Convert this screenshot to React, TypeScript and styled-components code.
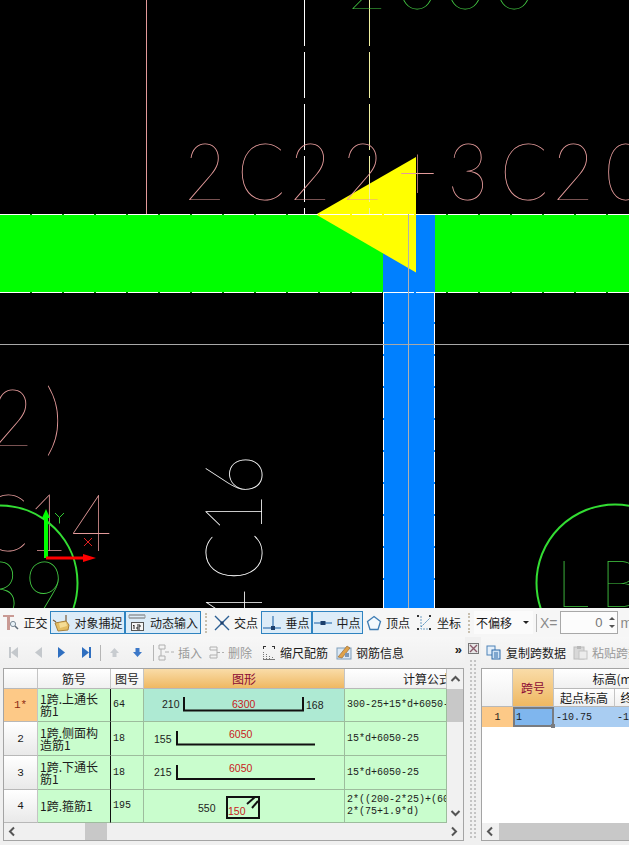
import styled, { createGlobalStyle } from "styled-components";

const GlobalStyle = createGlobalStyle`
  html, body {
    margin: 0;
    padding: 0;
    background: #f0f0f0;
  }
`;

const uiFont = `"Noto Sans CJK SC", "Liberation Sans", sans-serif`;
const monoFont = `"Liberation Mono", "Noto Sans CJK SC", monospace`;

const Page = styled.div`
  width: 629px;
  height: 845px;
  display: flex;
  flex-direction: column;
  overflow: hidden;
  background: #f0f0f0;
  font-family: ${uiFont};
  font-size: 12px;
  color: #1c1c1c;
`;

const Drawing = styled.svg`
  display: block;
  flex: none;
  width: 629px;
  height: 608px;
  background: #000;
`;

const CadText = styled.text<{ $color: string; $size?: number }>`
  font-family: "Lato", "Roboto", sans-serif;
  font-weight: 100;
  font-size: ${(p) => p.$size ?? 80}px;
  fill: ${(p) => p.$color};
`;

const SnapBar = styled.div`
  flex: none;
  height: 29px;
  display: flex;
  align-items: center;
  background: #f6f6f6;
  white-space: nowrap;
`;

const SnapButton = styled.div<{ $active?: boolean; $width: number }>`
  flex: none;
  box-sizing: border-box;
  width: ${(p) => p.$width}px;
  height: 23px;
  display: flex;
  align-items: center;
  justify-content: center;
  gap: 4px;
  border: 1px solid ${(p) => (p.$active ? "#2f83c0" : "transparent")};
  background: ${(p) => (p.$active ? "#dcecf8" : "transparent")};
`;

const DottedRule = styled.div<{ $gap: number }>`
  flex: none;
  width: 0;
  height: 20px;
  margin: 0 ${(p) => p.$gap}px;
  border-left: 2px dotted #c8bfae;
`;

const OffsetSelect = styled.div`
  flex: none;
  box-sizing: border-box;
  width: 59px;
  height: 23px;
  display: flex;
  align-items: center;
  justify-content: space-between;
  padding: 0 4px 0 2px;
  background: #fbfbfb;
`;

const Caret = styled.span`
  width: 0;
  height: 0;
  border-left: 3px solid transparent;
  border-right: 3px solid transparent;
  border-top: 3px solid #222;
`;

const ThinRule = styled.div`
  flex: none;
  width: 1px;
  height: 18px;
  margin: 0 3px;
  background: #b8b8b8;
`;

const GreyLabel = styled.span`
  color: #8a8a8a;
  font-family: "Liberation Sans", sans-serif;
  font-size: 14px;
`;

const SpinBox = styled.div`
  flex: none;
  box-sizing: border-box;
  width: 58px;
  height: 23px;
  margin: 0 3px 0 2px;
  display: flex;
  align-items: center;
  justify-content: flex-end;
  gap: 6px;
  padding-right: 2px;
  border: 1px solid #a8a8a8;
  background: #fcfcfc;
  color: #777;
  font-family: "Liberation Sans", sans-serif;
  font-size: 13px;
`;

const SpinArrows = styled.div`
  display: flex;
  flex-direction: column;
  gap: 5px;
`;

const SpinArrow = styled.span<{ $down?: boolean }>`
  display: block;
  width: 0;
  height: 0;
  border-left: 3px solid transparent;
  border-right: 3px solid transparent;
  border-${(p) => (p.$down ? "top" : "bottom")}: 3px solid #555;
`;

const Panes = styled.div`
  flex: 1;
  display: flex;
  min-height: 0;
`;

const Pane = styled.div<{ $width?: number }>`
  ${(p) => (p.$width ? `width: ${p.$width}px; flex: none;` : "flex: 1; min-width: 0;")}
  display: flex;
  flex-direction: column;
`;

const PaneToolbar = styled.div<{ $pad: number }>`
  flex: none;
  height: 31px;
  box-sizing: border-box;
  padding-left: ${(p) => p.$pad}px;
  display: flex;
  align-items: center;
  white-space: nowrap;
  overflow: hidden;
  background: linear-gradient(#f7f7f7, #efefef);
`;

const ToolSlot = styled.div<{ $width: number }>`
  flex: none;
  width: ${(p) => p.$width}px;
  display: flex;
  align-items: center;
  justify-content: center;
`;

const ToolAction = styled.div<{ $muted?: boolean; $gap: number; $inner?: number }>`
  flex: none;
  display: flex;
  align-items: center;
  gap: ${(p) => p.$inner ?? 4}px;
  margin-right: ${(p) => p.$gap}px;
  color: ${(p) => (p.$muted ? "#9a9a9a" : "#1c1c1c")};
`;

const ToolRule = styled.div<{ $gap: number }>`
  flex: none;
  width: 1px;
  height: 16px;
  margin: 0 ${(p) => p.$gap}px;
  background: #b5b5b5;
`;

const Overflow = styled.span`
  margin-left: auto;
  margin-right: 3px;
  font-family: "Liberation Sans", sans-serif;
  font-weight: 700;
  font-size: 13px;
  line-height: 13px;
  margin-bottom: 6px;
`;

const Frame = styled.div<{ $left: number; $right: number }>`
  box-sizing: border-box;
  height: 173px;
  margin: 0 ${(p) => p.$right}px 0 ${(p) => p.$left}px;
  display: grid;
  grid-template-rows: 154px 17px;
  border: 1px solid #a4a4a4;
  background: #fff;
  overflow: hidden;
`;

const LeftBody = styled.div`
  display: grid;
  grid-template-columns: 443px 16px;
  min-height: 0;
`;

const BarGrid = styled.div`
  display: grid;
  grid-template-columns: 34px 73px 33px 201px 102px;
  grid-template-rows: 20px 33px 34px 34px 33px;
  overflow: hidden;
`;

const HeadCell = styled.div<{ $hot?: boolean; $span?: number; $shift?: number }>`
  box-sizing: border-box;
  display: flex;
  align-items: center;
  justify-content: ${(p) => (p.$shift ? "flex-start" : "center")};
  padding-left: ${(p) => p.$shift ?? 0}px;
  ${(p) => (p.$span ? `grid-column: span ${p.$span};` : "")}
  border-right: 1px solid #c4c4c4;
  border-bottom: 1px solid #b8b8b8;
  background: ${(p) =>
    p.$hot ? "linear-gradient(#f9dca8, #efb862)" : "linear-gradient(#ffffff, #f0f0f0)"};
  color: ${(p) => (p.$hot ? "#8c0a34" : "#1c1c1c")};
  overflow: hidden;
  white-space: nowrap;
`;

const RowHead = styled.div<{ $current?: boolean }>`
  box-sizing: border-box;
  display: flex;
  align-items: center;
  justify-content: center;
  border-right: 1px solid #c4c4c4;
  border-bottom: 1px solid #b8b8b8;
  background: ${(p) => (p.$current ? "#fdc987" : "linear-gradient(#ffffff, #e9e9e9)")};
  color: ${(p) => (p.$current ? "#8c2a14" : "#1c1c1c")};
  font-family: ${monoFont};
  font-size: 11px;
`;

const DataCell = styled.div<{ $picked?: boolean; $heavy?: boolean; $mono?: boolean }>`
  box-sizing: border-box;
  display: flex;
  align-items: center;
  padding: 0 ${(p) => (p.$mono ? 2 : 0)}px;
  border-right: 1px solid ${(p) => (p.$heavy ? "#111" : "#9dbc9d")};
  border-bottom: 1px solid #9dbc9d;
  background: ${(p) => (p.$picked ? "#aeead3" : "#c9fdcd")};
  overflow: hidden;
  font-family: ${(p) => (p.$mono ? monoFont : uiFont)};
  font-size: ${(p) => (p.$mono ? 10 : 12)}px;
  line-height: 12px;
  white-space: pre;
`;

const NameText = styled.div`
  padding-left: 2px;
  width: 64px;
  white-space: normal;
  word-break: break-all;
`;

const Shape = styled.svg`
  display: block;
  flex: none;
  align-self: flex-start;
  width: 200px;
  height: 34px;
`;

const ShapeLabel = styled.text<{ $red?: boolean }>`
  font-family: "Liberation Sans", sans-serif;
  font-size: 10.5px;
  fill: ${(p) => (p.$red ? "#c8201c" : "#222")};
`;

const VScroll = styled.div`
  display: grid;
  grid-template-rows: 20px 33px 1fr 20px;
  background: #f1f1f1;
`;

const ScrollArrow = styled.div`
  display: flex;
  align-items: center;
  justify-content: center;
`;

const ScrollSlab = styled.div`
  background: #c8c8c8;
`;

const HThumb = styled(ScrollSlab)`
  flex: none;
  width: 22px;
  margin-left: 64px;
`;

const HScroll = styled.div`
  display: flex;
  align-items: stretch;
  background: #f0f0f0;
`;

const HArrow = styled(ScrollArrow)<{ $end?: boolean }>`
  flex: none;
  width: 17px;
  ${(p) => (p.$end ? "margin-left: auto;" : "")}
`;

const Splitter = styled.div`
  flex: none;
  width: 16px;
  display: flex;
  flex-direction: column;
  align-items: center;
  padding-top: 6px;
  gap: 5px;
`;

const Grip = styled.div`
  flex: 1;
  width: 8px;
  margin-bottom: 5px;
  background-image: radial-gradient(circle, #c4c4c4 1px, transparent 1.2px);
  background-size: 4px 4px;
`;

const SpanGrid = styled.div`
  display: grid;
  grid-template-columns: 31px 41px 61px 60px;
  grid-template-rows: 20px 18px 20px 1fr;
  overflow: hidden;
  background: #fff;
`;

const CornerCell = styled(HeadCell)`
  grid-row: span 2;
`;

const SpanRow = styled.div<{ $current?: boolean }>`
  display: flex;
  align-items: center;
  justify-content: ${(p) => (p.$current ? "center" : "flex-start")};
  padding-left: ${(p) => (p.$current ? 0 : 2)}px;
  background: ${(p) => (p.$current ? "#fdc987" : "#a9cdf2")};
  font-family: ${monoFont};
  font-size: 10px;
`;

const ActiveCell = styled.div`
  position: relative;
  box-sizing: border-box;
  display: flex;
  align-items: center;
  padding-left: 1px;
  border: 2px solid #787b80;
  background: #7fb6ee;
  font-family: ${monoFont};
  font-size: 10px;
`;

const Handle = styled.span`
  position: absolute;
  right: -3px;
  bottom: -3px;
  width: 4px;
  height: 4px;
  background: #787b80;
`;

const Filler = styled.div`
  grid-column: 1 / -1;
`;

const RightThumb = styled(ScrollSlab)`
  flex: 1;
`;

/* ---------- icons ---------- */

const Icon = styled.svg`
  display: block;
  flex: none;
`;

const OrthoIcon = () => (
  <Icon width="17" height="17" viewBox="0 0 17 17">
    <path d="M1 1h11v2H8v13H5V3H1z" fill="#c99a94" />
    <circle cx="11" cy="10" r="2.6" fill="#e8f2f8" stroke="#7d8c98" />
    <path d="M13 12l3 3" stroke="#5f6c78" strokeWidth="1.5" />
  </Icon>
);

const CaptureIcon = () => (
  <Icon width="18" height="18" viewBox="0 0 18 18">
    <path d="M1 6l3 2M14 1v7" stroke="#7a5c3c" strokeWidth="1.2" />
    <path d="M3 9l11-2 3 4-1 5-10 1z" fill="#e4bd62" stroke="#a8813c" />
    <path d="M7 9l7-1 1 4-7 2z" fill="#f5dc94" />
  </Icon>
);

const InputIcon = () => (
  <Icon width="18" height="18" viewBox="0 0 18 18">
    <path d="M1 1h16M1 4h16" stroke="#6c6c6c" />
    <path d="M1 1v3M17 1v3" stroke="#9a9a9a" />
    <rect x="3.5" y="8.5" width="12" height="8" fill="#f5f5f5" stroke="#555" />
    <path d="M6 15v-4l-1 1M9 11h3v2H9v2h3" fill="none" stroke="#222" />
  </Icon>
);

const CrossIcon = () => (
  <Icon width="16" height="16" viewBox="0 0 16 16">
    <path d="M1 1l14 14M15 1L1 15" stroke="#2c5f94" strokeWidth="1.4" />
    <rect x="6.500" y="6.500" width="3" height="3" fill="#1c3f6c" />
  </Icon>
);

const PerpIcon = () => (
  <Icon width="18" height="16" viewBox="0 0 18 16">
    <path d="M0 13h18" stroke="#4c86bc" strokeWidth="1.4" />
    <path d="M10 1v11" stroke="#4c86bc" strokeWidth="1.4" />
    <rect x="8" y="11" width="4" height="4" fill="#1c3f6c" />
  </Icon>
);

const MidIcon = () => (
  <Icon width="18" height="16" viewBox="0 0 18 16">
    <path d="M0 8h18" stroke="#4c86bc" strokeWidth="1.4" />
    <rect x="6.500" y="6" width="5" height="4" fill="#1c3f6c" />
  </Icon>
);

const VertexIcon = () => (
  <Icon width="16" height="16" viewBox="0 0 16 16">
    <path d="M8 1.500l6.500 5-2.500 8H4L1.500 6.500z" fill="#f4f9fd" stroke="#3f7db4" strokeWidth="1.3" />
  </Icon>
);

const CoordIcon = () => (
  <Icon width="17" height="17" viewBox="0 0 17 17">
    <path d="M5 2v13h11" fill="none" stroke="#6e9fc4" strokeDasharray="2 1" />
    <path d="M5 13L14 4" stroke="#4d8dbc" strokeDasharray="2 1" />
    <rect x="1" y="1" width="2" height="2" fill="#333" />
    <rect x="13" y="1" width="2" height="2" fill="#333" />
    <rect x="1" y="14" width="2" height="2" fill="#333" />
    <rect x="13" y="14" width="2" height="2" fill="#333" />
  </Icon>
);

const NavIcon = ({ dir, bar, on }: { dir: "l" | "r"; bar?: boolean; on?: boolean }) => {
  const fill = on ? "#2f6fc0" : "#c4c8cc";
  return (
    <Icon width="10" height="13" viewBox="0 0 10 13">
      <path d={dir === "r" ? "M1 1l7 5.500L1 12z" : "M9 1L2 6.500 9 12z"} fill={fill} />
      {bar && <rect x={dir === "r" ? 8 : 0} y="1" width="2" height="11" fill={fill} />}
    </Icon>
  );
};

const MoveIcon = ({ up, on }: { up?: boolean; on?: boolean }) => (
  <Icon width="11" height="11" viewBox="0 0 11 11">
    <path
      d={up ? "M5.500 1L10 6H7.500v4h-4V6H1z" : "M5.500 10L10 5H7.500V1h-4v4H1z"}
      fill={on ? "#3c78c8" : "#c8ccd0"}
    />
  </Icon>
);

const InsertIcon = () => (
  <Icon width="16" height="17" viewBox="0 0 16 17">
    <path d="M1 1h6v4H1zM1 12h6v4H1zM3 5v7M7 8h4M13 8h3" fill="none" stroke="#b0b0b0" />
  </Icon>
);

const DeleteIcon = () => (
  <Icon width="15" height="13" viewBox="0 0 15 13">
    <path d="M1 1h7v3H1zM1 9h7v3H1zM8 4v5M8 6.500h3M13 6.500h2" fill="none" stroke="#b0b0b0" />
  </Icon>
);

const ScaleIcon = () => (
  <Icon width="14" height="15" viewBox="0 0 14 15">
    <path d="M1 1.500h3M10 1.500h3M12.500 1v3M1.500 1v3" stroke="#333" />
    <path d="M1.500 7v7M4.500 9v5M7.500 11v3M10.500 12v2" stroke="#777" strokeDasharray="1 1" />
    <path d="M1 14.500h12" stroke="#777" />
  </Icon>
);

const InfoIcon = () => (
  <Icon width="16" height="15" viewBox="0 0 16 15">
    <rect x="1" y="3" width="14" height="11" fill="#dbe8f4" stroke="#7f9dba" />
    <path d="M2 12L11 1l3 2-8 10z" fill="#e0a24a" stroke="#8c5f2c" strokeWidth=".6" />
    <rect x="9" y="8" width="4" height="4" fill="#7e97b4" />
  </Icon>
);

const CopyIcon = () => (
  <Icon width="15" height="15" viewBox="0 0 15 15">
    <rect x="1" y="1" width="8" height="9" fill="#e4effa" stroke="#4f83b8" />
    <rect x="6" y="5" width="8" height="9" fill="#cfe2f5" stroke="#2f6aa8" />
    <path d="M8 8h4M8 10h4M8 12h4" stroke="#2f6aa8" />
  </Icon>
);

const PasteIcon = () => (
  <Icon width="15" height="15" viewBox="0 0 15 15">
    <rect x="1" y="2" width="10" height="12" fill="#d8d8d8" stroke="#bcbcbc" />
    <rect x="4" y="1" width="4" height="3" fill="#b8b8b8" />
    <rect x="6" y="6" width="8" height="8" fill="#ececec" stroke="#c4c4c4" />
  </Icon>
);

const CloseBox = () => (
  <Icon width="11" height="11" viewBox="0 0 11 11">
    <rect x=".5" y=".5" width="10" height="10" fill="#e6e6e6" stroke="#777" />
    <path d="M2 2l7 7M9 2L2 9" stroke="#8a5a6a" strokeWidth="1.4" />
  </Icon>
);

const Chevron = ({ dir }: { dir: "up" | "down" | "left" | "right" }) => {
  const paths = {
    up: "M1.500 7L5.500 3l4 4",
    down: "M1.500 3l4 4 4-4",
    left: "M7 1.500L3 5.500l4 4",
    right: "M3 1.500l4 4-4 4",
  };
  return (
    <Icon width="11" height="11" viewBox="0 0 11 11">
      <path d={paths[dir]} fill="none" stroke="#555" strokeWidth="2" />
    </Icon>
  );
};

/* ---------- data ---------- */

const snapTools = [
  { label: "交点", width: 50, icon: <CrossIcon /> },
  { label: "垂点", width: 51, icon: <PerpIcon />, active: true },
  { label: "中点", width: 51, icon: <MidIcon />, active: true },
  { label: "顶点", width: 50, icon: <VertexIcon /> },
  { label: "坐标", width: 51, icon: <CoordIcon /> },
];

const bars = [
  { no: "1*", name: "1跨.上通长筋1", fig: "64", formula: "300-25+15*d+6050-", current: true },
  { no: "2", name: "1跨.侧面构造筋1", fig: "18", formula: "15*d+6050-25" },
  { no: "3", name: "1跨.下通长筋1", fig: "18", formula: "15*d+6050-25" },
  { no: "4", name: "1跨.箍筋1", fig: "195", formula: "2*((200-2*25)+(60\n2*(75+1.9*d)" },
];

const BarShape = ({ index }: { index: number }) => {
  if (index === 0) {
    return (
      <Shape>
        <ShapeLabel x="18" y="19">210</ShapeLabel>
        <path d="M40 8v13.500h119V8" fill="none" stroke="#111" strokeWidth="2" />
        <ShapeLabel x="88" y="19" $red>6300</ShapeLabel>
        <ShapeLabel x="162" y="20">168</ShapeLabel>
      </Shape>
    );
  }
  if (index === 3) {
    return (
      <Shape>
        <ShapeLabel x="54" y="22">550</ShapeLabel>
        <path d="M83 7h32v21H83z" fill="none" stroke="#111" strokeWidth="2" />
        <path d="M103 14l8-7M108 18l6-7" stroke="#111" strokeWidth="2" />
        <ShapeLabel x="84" y="25" $red>150</ShapeLabel>
      </Shape>
    );
  }
  const second = index === 1;
  return (
    <Shape>
      <ShapeLabel x="10" y={second ? 21 : 20}>{second ? "155" : "215"}</ShapeLabel>
      <path d={`M33 9V${second ? 22.5 : 23}h138`} fill="none" stroke="#111" strokeWidth="2" />
      <ShapeLabel x="85" y="16" $red>6050</ShapeLabel>
    </Shape>
  );
};

// CAD text is narrower than the font, so each run is squeezed and its glyphs placed one by one
const squeeze = 0.88;
const run = (xs: number[], origin: string) => ({
  x: xs.map((v) => v / squeeze).join(" "),
  y: 0,
  transform: `${origin} scale(${squeeze} 1)`,
});

export default function App() {
  return (
    <Page>
      <GlobalStyle />
      <Drawing viewBox="0 0 629 608">
        {/* beam and column fills */}
        <rect x="383" y="214" width="52" height="394" fill="#0080ff" />
        <rect x="0" y="214.500" width="383" height="78" fill="#00ff00" />
        <rect x="435" y="214.500" width="194" height="78" fill="#00ff00" />
        <polygon points="316,214.500 416,157 416,272.500" fill="#ffff00" />

        <line x1="146.500" y1="0" x2="146.500" y2="214" stroke="#e39a9a" />
        <line x1="304.500" y1="0" x2="304.500" y2="214" stroke="#fff" strokeDasharray="46 6" />
        <line x1="369.500" y1="0" x2="369.500" y2="214" stroke="#f0f0a0" strokeDasharray="46 6" />

        <CadText
          $color="#e39a9a"
          {...run([184.5, 237.1, 289.7, 342.3, 396.9, 447.5, 500.1, 552.7, 605.3], "translate(0 200)")}
        >
          2C22+3C20
        </CadText>
        <CadText $color="#44cc44" x="348 398 446 495" y="9" $size={66}>2000</CadText>
        <CadText $color="#e39a9a" {...run([-8, 45], "translate(0 446)")}>2)</CadText>
        <CadText $color="#e39a9a" {...run([-20, 27, 71], "translate(0 551)")}>C14</CadText>
        <CadText $color="#44cc44" {...run([-21, 24], "translate(0 618)")}>39</CadText>
        <CadText $color="#ffffff" {...run([-20, 29, 76, 114.5], "translate(262 610) rotate(-90)")}>4C16</CadText>
        <CadText $color="#44cc44" x="556 600" y="607" $size={66}>LB</CadText>

        <circle cx="0" cy="583" r="77.500" fill="none" stroke="#33dd33" strokeWidth="2" />
        <circle cx="615" cy="583" r="78.500" fill="none" stroke="#33dd33" strokeWidth="2" />

        <line x1="0" y1="214.500" x2="629" y2="214.500" stroke="#fff" strokeDasharray="30 2" />
        <line x1="0" y1="292.500" x2="629" y2="292.500" stroke="#fff" strokeDasharray="30 2" />
        <line x1="383.500" y1="292" x2="383.500" y2="608" stroke="#fff" strokeDasharray="30 2" />
        <line x1="434.500" y1="292" x2="434.500" y2="608" stroke="#fff" strokeDasharray="30 2" />

        <line x1="0" y1="344.500" x2="629" y2="344.500" stroke="#a8a8a8" />
        <line x1="408.500" y1="214" x2="408.500" y2="608" stroke="#b0b0b0" />

        {/* UCS axes */}
        <path d="M46 558V514" stroke="#00ff00" strokeWidth="4" />
        <path d="M46 509l4 9h-8z" fill="#00ff00" />
        <path d="M46 558h38" stroke="#ff0000" strokeWidth="3" />
        <path d="M96 558l-13-4v8z" fill="#ff0000" />
        <path d="M55 513l4.500 4.500 4.500-4.500M59.500 517.500v6" fill="none" stroke="#33cc33" />
        <path d="M84 538l8 8M92 538l-8 8" fill="none" stroke="#e02020" />
      </Drawing>

      <SnapBar>
        <SnapButton $width={50}><OrthoIcon />正交</SnapButton>
        <SnapButton $width={75} $active><CaptureIcon />对象捕捉</SnapButton>
        <SnapButton $width={76} $active><InputIcon />动态输入</SnapButton>
        <DottedRule $gap={4} />
        {snapTools.map((tool) => (
          <SnapButton key={tool.label} $width={tool.width} $active={tool.active}>
            {tool.icon}
            {tool.label}
          </SnapButton>
        ))}
        <DottedRule $gap={4} />
        <OffsetSelect>不偏移<Caret /></OffsetSelect>
        <ThinRule />
        <GreyLabel>X=</GreyLabel>
        <SpinBox>
          0
          <SpinArrows><SpinArrow /><SpinArrow $down /></SpinArrows>
        </SpinBox>
        <GreyLabel>m</GreyLabel>
      </SnapBar>

      <Panes>
        <Pane $width={465}>
          <PaneToolbar $pad={2}>
            <ToolSlot $width={24}><NavIcon dir="l" bar /></ToolSlot>
            <ToolSlot $width={24}><NavIcon dir="l" /></ToolSlot>
            <ToolSlot $width={24}><NavIcon dir="r" on /></ToolSlot>
            <ToolSlot $width={24}><NavIcon dir="r" bar on /></ToolSlot>
            <ToolRule $gap={2} />
            <ToolSlot $width={22}><MoveIcon up /></ToolSlot>
            <ToolSlot $width={24}><MoveIcon on /></ToolSlot>
            <ToolRule $gap={4} />
            <ToolAction $muted $gap={7}><InsertIcon />插入</ToolAction>
            <ToolAction $muted $gap={10}><DeleteIcon />删除</ToolAction>
            <ToolAction $gap={8}><ScaleIcon />缩尺配筋</ToolAction>
            <ToolAction $gap={0}><InfoIcon />钢筋信息</ToolAction>
            <Overflow>»</Overflow>
          </PaneToolbar>
          <Frame $left={3} $right={1}>
            <LeftBody>
              <BarGrid>
                <HeadCell />
                <HeadCell>筋号</HeadCell>
                <HeadCell>图号</HeadCell>
                <HeadCell $hot>图形</HeadCell>
                <HeadCell $shift={58}>计算公式</HeadCell>
                {bars.map((bar, i) => (
                  <BarRowCells key={bar.no} bar={bar} index={i} />
                ))}
              </BarGrid>
              <VScroll>
                <ScrollArrow><Chevron dir="up" /></ScrollArrow>
                <ScrollSlab />
                <div />
                <ScrollArrow><Chevron dir="down" /></ScrollArrow>
              </VScroll>
            </LeftBody>
            <HScroll>
              <HArrow><Chevron dir="left" /></HArrow>
              <HThumb />
              <HArrow $end><Chevron dir="right" /></HArrow>
            </HScroll>
          </Frame>
        </Pane>

        <Splitter>
          <CloseBox />
          <Grip />
        </Splitter>

        <Pane>
          <PaneToolbar $pad={5}>
            <ToolAction $gap={7} $inner={5}><CopyIcon />复制跨数据</ToolAction>
            <ToolAction $muted $gap={0}><PasteIcon />粘贴跨数据</ToolAction>
          </PaneToolbar>
          <Frame $left={0} $right={-4}>
            <SpanGrid>
              <CornerCell />
              <CornerCell $hot>跨号</CornerCell>
              <HeadCell $span={2}>标高(m)</HeadCell>
              <HeadCell>起点标高</HeadCell>
              <HeadCell>终点标高</HeadCell>
              <SpanRow $current>1</SpanRow>
              <ActiveCell>1<Handle /></ActiveCell>
              <SpanRow>-10.75</SpanRow>
              <SpanRow>-10.75</SpanRow>
              <Filler />
            </SpanGrid>
            <HScroll>
              <HArrow><Chevron dir="left" /></HArrow>
              <RightThumb />
            </HScroll>
          </Frame>
        </Pane>
      </Panes>
    </Page>
  );
}

function BarRowCells({ bar, index }: { bar: (typeof bars)[number]; index: number }) {
  return (
    <>
      <RowHead $current={bar.current}>{bar.no}</RowHead>
      <DataCell $heavy>
        <NameText>{bar.name}</NameText>
      </DataCell>
      <DataCell $mono>{bar.fig}</DataCell>
      <DataCell $picked={bar.current}>
        <BarShape index={index} />
      </DataCell>
      <DataCell $mono>{bar.formula}</DataCell>
    </>
  );
}
